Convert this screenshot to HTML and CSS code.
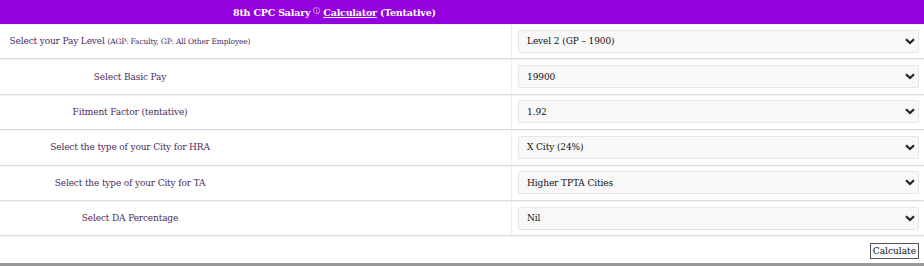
FILE: index.html
```html
<!DOCTYPE html>
<html>
<head>
<meta charset="utf-8">
<link rel="stylesheet" href="styles.css">
</head>
<body>
<div class="calc">
  <div class="head"><span class="title">8th CPC Salary <sup class="info">ⓘ</sup> <a class="link" href="#">Calculator</a> (Tentative)</span></div>
  <div class="row">
    <div class="label"><span class="ltext">Select your Pay Level <small class="note">(AGP: Faculty, GP: All Other Employee)</small></span></div>
    <div class="field"><div class="select"><span>Level 2 (GP – 1900)</span><svg class="chev" viewBox="0 0 10 7" width="10" height="7"><path d="M1 1.2 L5 5 L9 1.2" fill="none" stroke="#222" stroke-width="2.2"/></svg></div></div>
  </div>
  <div class="row">
    <div class="label"><span class="ltext">Select Basic Pay</span></div>
    <div class="field"><div class="select"><span>19900</span><svg class="chev" viewBox="0 0 10 7" width="10" height="7"><path d="M1 1.2 L5 5 L9 1.2" fill="none" stroke="#222" stroke-width="2.2"/></svg></div></div>
  </div>
  <div class="row">
    <div class="label"><span class="ltext">Fitment Factor (tentative)</span></div>
    <div class="field"><div class="select"><span>1.92</span><svg class="chev" viewBox="0 0 10 7" width="10" height="7"><path d="M1 1.2 L5 5 L9 1.2" fill="none" stroke="#222" stroke-width="2.2"/></svg></div></div>
  </div>
  <div class="row">
    <div class="label"><span class="ltext">Select the type of your City for HRA</span></div>
    <div class="field"><div class="select"><span>X City (24%)</span><svg class="chev" viewBox="0 0 10 7" width="10" height="7"><path d="M1 1.2 L5 5 L9 1.2" fill="none" stroke="#222" stroke-width="2.2"/></svg></div></div>
  </div>
  <div class="row">
    <div class="label"><span class="ltext">Select the type of your City for TA</span></div>
    <div class="field"><div class="select"><span>Higher TPTA Cities</span><svg class="chev" viewBox="0 0 10 7" width="10" height="7"><path d="M1 1.2 L5 5 L9 1.2" fill="none" stroke="#222" stroke-width="2.2"/></svg></div></div>
  </div>
  <div class="row">
    <div class="label"><span class="ltext">Select DA Percentage</span></div>
    <div class="field"><div class="select"><span>Nil</span><svg class="chev" viewBox="0 0 10 7" width="10" height="7"><path d="M1 1.2 L5 5 L9 1.2" fill="none" stroke="#222" stroke-width="2.2"/></svg></div></div>
  </div>
  <div class="actions"><button class="btn" type="button">Calculate</button></div>
  <div class="foot"></div>
</div>
</body>
</html>
```
FILE: styles.css
```css
html, body { margin: 0; padding: 0; background: #fff; }
body { font-family: "DejaVu Serif", "Liberation Serif", serif; width: 924px; height: 267px; overflow: hidden; }
.calc { display: flex; flex-direction: column; }
.head { background: #9500df; height: 24px; display: flex; align-items: center; padding-left: 233px; }
.title { color: #fff; font-weight: bold; font-size: 9.5px; letter-spacing: -0.2px; }
.info { font-size: 7px; font-weight: normal; vertical-align: 3px; line-height: 0; }
.link { color: #fff; text-decoration: underline; }
.row { display: grid; grid-template-columns: 512px 1fr; height: 34.4px; border-bottom: 1px solid #dcdcdc; box-shadow: inset 0 1px 0 #f3f3f3; }
.label { display: flex; align-items: center; border-right: 1px solid #eee; }
.ltext { width: 260px; text-align: center; color: #4b2a5e; font-size: 9px; letter-spacing: -0.15px; }
.note { font-size: 7.5px; }
.field { display: flex; align-items: center; padding: 0 5px 0 6px; }
.select { flex: 1; height: 23px; box-sizing: border-box; border: 1px solid #e6e6e6; border-radius: 2px; background: #f8f8f8; display: flex; align-items: center; justify-content: space-between; padding: 0 3px 0 8px; font-size: 9px; color: #111; letter-spacing: -0.1px; }
.chev { display: block; }
.actions { display: flex; justify-content: flex-end; padding: 6px 5px 0 0; height: 27px; box-sizing: border-box; border-top: 1px solid #eee; }
.btn { font-family: "DejaVu Serif", "Liberation Serif", serif; font-size: 9px; height: 16px; padding: 0 2px; border: 1px solid #555; background: #fafafa; color: #111; line-height: 14px; }
.foot { height: 3px; background: #999; }
```
